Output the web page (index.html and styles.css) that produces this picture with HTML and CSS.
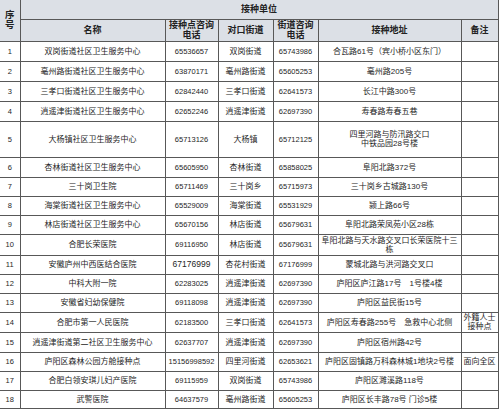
FILE: index.html
```html
<!DOCTYPE html>
<html lang="zh-CN">
<head>
<meta charset="utf-8">
<title>接种单位</title>
<link rel="stylesheet" href="styles.css">
</head>
<body>
<table class="sheet">
  <colgroup>
    <col class="c-no"><col class="c-name"><col class="c-tel"><col class="c-street"><col class="c-stel"><col class="c-addr"><col class="c-note">
  </colgroup>
  <thead>
    <tr class="h1">
      <th rowspan="2" class="first">序号</th>
      <th colspan="6">接种单位</th>
    </tr>
    <tr class="h2">
      <th>名称</th>
      <th>接种点咨询<br>电话</th>
      <th>对口街道</th>
      <th>街道咨询<br>电话</th>
      <th>接种地址</th>
      <th>备注</th>
    </tr>
  </thead>
  <tbody>
    <tr class="r20"><td class="first">1</td><td>双岗街道社区卫生服务中心</td><td class="num">65536657</td><td>双岗街道</td><td class="num">65743986</td><td>合瓦路61号（宾小桥小区东门）</td><td></td></tr>
    <tr class="r20"><td class="first">2</td><td>亳州路街道社区卫生服务中心</td><td class="num">63870171</td><td>亳州路街道</td><td class="num">65605253</td><td>亳州路205号</td><td></td></tr>
    <tr class="r20"><td class="first">3</td><td>三孝口街道社区卫生服务中心</td><td class="num">62842440</td><td>三孝口街道</td><td class="num">62641573</td><td>长江中路300号</td><td></td></tr>
    <tr class="r20"><td class="first">4</td><td>逍遥津街道社区卫生服务中心</td><td class="num">62652246</td><td>逍遥津街道</td><td class="num">62697390</td><td>寿春路寿春五巷</td><td></td></tr>
    <tr class="r36"><td class="first">5</td><td>大杨镇社区卫生服务中心</td><td class="num">65713126</td><td>大杨镇</td><td class="num">65712125</td><td>四里河路与防汛路交口<br>中铁品园28号楼</td><td></td></tr>
    <tr class="r20"><td class="first">6</td><td>杏林街道社区卫生服务中心</td><td class="num">65605950</td><td>杏林街道</td><td class="num">65858025</td><td>阜阳北路372号</td><td></td></tr>
    <tr class="r19"><td class="first">7</td><td>三十岗卫生院</td><td class="num">65711469</td><td>三十岗乡</td><td class="num">65715973</td><td>三十岗乡古城路130号</td><td></td></tr>
    <tr class="r19"><td class="first">8</td><td>海棠街道社区卫生服务中心</td><td class="num">65529009</td><td>海棠街道</td><td class="num">65531929</td><td>颍上路66号</td><td></td></tr>
    <tr class="r19"><td class="first">9</td><td>林店街道社区卫生服务中心</td><td class="num">65670156</td><td>林店街道</td><td class="num">65679631</td><td>阜阳北路荣凤苑小区28栋</td><td></td></tr>
    <tr class="r21"><td class="first">10</td><td>合肥长荣医院</td><td class="num">69116950</td><td>林店街道</td><td class="num">65679631</td><td>阜阳北路与天水路交叉口长荣医院十三<br>栋</td><td></td></tr>
    <tr class="r19"><td class="first">11</td><td>安徽庐州中西医结合医院</td><td class="num big">67176999</td><td>杏花村街道</td><td class="num">67176999</td><td>蒙城北路与洪河路交叉口</td><td></td></tr>
    <tr class="r19"><td class="first">12</td><td>中科大附一院</td><td class="num">62283025</td><td>逍遥津街道</td><td class="num">62697390</td><td>庐阳区庐江路17号　1号楼4楼</td><td></td></tr>
    <tr class="r19"><td class="first">13</td><td>安徽省妇幼保健院</td><td class="num">69118098</td><td>逍遥津街道</td><td class="num">62697390</td><td>庐阳区益民街15号</td><td></td></tr>
    <tr class="r20"><td class="first">14</td><td>合肥市第一人民医院</td><td class="num">62183500</td><td>三孝口街道</td><td class="num">62641573</td><td>庐阳区寿春路255号　急救中心北侧</td><td>外籍人士<br>接种点</td></tr>
    <tr class="r20"><td class="first">15</td><td>逍遥津街道第二社区卫生服务中心</td><td class="num">62637707</td><td>逍遥津街道</td><td class="num">62697390</td><td>庐阳区宿州路42号</td><td></td></tr>
    <tr class="r19"><td class="first">16</td><td>庐阳区森林公园方舱接种点</td><td class="num">15156998592</td><td>四里河街道</td><td class="num">62653621</td><td>庐阳区固镇路万科森林城1地块2号楼</td><td>面向全区</td></tr>
    <tr class="r19"><td class="first">17</td><td>合肥白领安琪儿妇产医院</td><td class="num">69115959</td><td>双岗街道</td><td class="num">65743986</td><td>庐阳区濉溪路118号</td><td></td></tr>
    <tr class="r18"><td class="first">18</td><td>武警医院</td><td class="num">64637579</td><td>亳州路街道</td><td class="num">65605253</td><td>庐阳区长丰路78号 门诊5楼</td><td></td></tr>
  </tbody>
</table>
</body>
</html>
```

FILE: styles.css
```css
html, body {
  margin: 0;
  padding: 0;
  background: #ffffff;
}

body {
  font-family: "Liberation Sans", "Noto Sans CJK SC", sans-serif;
  color: #262626;
}

.sheet {
  border-collapse: collapse;
  table-layout: fixed;
  width: 498px;
  font-size: 8px;
}

.c-no { width: 20px; }
.c-name { width: 145px; }
.c-tel { width: 53px; }
.c-street { width: 55px; }
.c-stel { width: 45px; }
.c-addr { width: 143px; }
.c-note { width: 37px; }

.sheet th,
.sheet td {
  border: 1px solid #585858;
  padding: 0 1px;
  text-align: center;
  vertical-align: middle;
  line-height: 9px;
  overflow: hidden;
  white-space: normal;
}

.sheet th {
  background: #dce0e6;
  font-weight: bold;
  font-size: 9px;
  line-height: 10px;
  color: #222;
}

.sheet thead tr:first-child th {
  border-top: none;
}

.sheet .first {
  border-left: none;
}

.sheet th.first {
  font-size: 9.5px;
}

.h1 { height: 19px; }
.h2 { height: 22px; }

.r18 { height: 18px; }
.r19 { height: 19px; }
.r20 { height: 20px; }
.r21 { height: 21px; }
.r36 { height: 36px; }

.sheet td.num {
  font-size: 7.5px;
}

.sheet td.num.big {
  font-size: 8.5px;
}

.sheet td.first {
  font-size: 7.5px;
}
```
